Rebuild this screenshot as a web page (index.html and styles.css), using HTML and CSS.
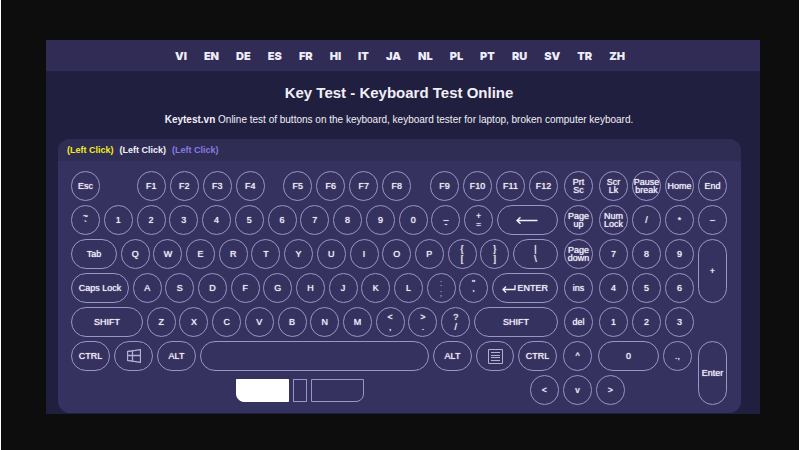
FILE: index.html
```html
<!DOCTYPE html>
<html lang="en">
<head>
<meta charset="utf-8">
<title>Key Test - Keyboard Test Online</title>
<link rel="stylesheet" href="styles.css">
</head>
<body>
<div class="page">
  <nav class="langs">
    <a href="#vi">VI</a><a href="#en">EN</a><a href="#de">DE</a><a href="#es">ES</a><a href="#fr">FR</a><a href="#hi">HI</a><a href="#it">IT</a><a href="#ja">JA</a><a href="#nl">NL</a><a href="#pl">PL</a><a href="#pt">PT</a><a href="#ru">RU</a><a href="#sv">SV</a><a href="#tr">TR</a><a href="#zh">ZH</a>
  </nav>
  <h1>Key Test - Keyboard Test Online</h1>
  <p class="intro"><b>Keytest.vn</b> Online test of buttons on the keyboard, keyboard tester for laptop, broken computer keyboard.</p>
  <main class="card">
    <header class="legend"><span class="pressed">(Left Click)</span><span>(Left Click)</span><span class="tested">(Left Click)</span></header>
    <div class="keyboard">
      <div class="rows">
        <div class="row">
          <div class="main fn">
            <button>Esc</button>
            <div class="group first"><button>F1</button><button>F2</button><button>F3</button><button>F4</button></div>
            <div class="group"><button>F5</button><button>F6</button><button>F7</button><button>F8</button></div>
            <div class="group"><button>F9</button><button>F10</button><button>F11</button><button>F12</button></div>
          </div>
          <button>Prt<br>Sc</button>
          <div class="group"><button>Scr<br>Lk</button><button>Pause<br>break</button><button>Home</button></div>
        </div>
        <div class="row">
          <div class="main">
            <button>~<br>`</button><button>1</button><button>2</button><button>3</button><button>4</button><button>5</button><button>6</button><button>7</button><button>8</button><button>9</button><button>0</button><button>_<br>-</button><button>+<br>=</button>
            <button class="w61" aria-label="Backspace"><svg width="22" height="9" viewBox="0 0 22 9"><path d="M1 4.5H21.500M4.500 1.200L1 4.500L4.500 7.800" fill="none" stroke="currentColor" stroke-width="1.500"/></svg></button>
          </div>
          <button>Page<br>up</button>
          <div class="group"><button>Num<br>Lock</button><button>/</button><button>*</button></div>
        </div>
        <div class="row">
          <div class="main">
            <button class="w46">Tab</button><button>Q</button><button>W</button><button>E</button><button>R</button><button>T</button><button>Y</button><button>U</button><button>I</button><button>O</button><button>P</button><button class="pair">{<br>[</button><button class="pair">}<br>]</button><button class="w45 pair">|<br>\</button>
          </div>
          <button>Page<br>down</button>
          <div class="group"><button>7</button><button>8</button><button>9</button></div>
        </div>
        <div class="row">
          <div class="main">
            <button class="w58">Caps Lock</button><button>A</button><button>S</button><button>D</button><button>F</button><button>G</button><button>H</button><button>J</button><button>K</button><button>L</button><button class="pair dim">:<br>;</button><button class="pair">"<br>'</button>
            <button class="w66"><svg width="14" height="9" viewBox="0 0 14 9"><path d="M1 5.500H13V1M4 2.500L1 5.500L4 8.500" fill="none" stroke="currentColor" stroke-width="1.300"/></svg><span>ENTER</span></button>
          </div>
          <button>ins</button>
          <div class="group"><button>4</button><button>5</button><button>6</button></div>
        </div>
        <div class="row">
          <div class="main">
            <button class="w72">SHIFT</button><button>Z</button><button>X</button><button>C</button><button>V</button><button>B</button><button>N</button><button>M</button><button class="pair">&lt;<br>,</button><button class="pair">&gt;<br>.</button><button class="pair">?<br>/</button><button class="w84">SHIFT</button>
          </div>
          <button>del</button>
          <div class="group"><button>1</button><button>2</button><button>3</button></div>
        </div>
        <div class="row bottom">
          <div class="main">
            <button class="w39">CTRL</button>
            <button class="w39" aria-label="Windows"><svg width="14" height="14" viewBox="0 0 14 14"><path d="M.5 2.500L5.500 1.800V6.500H.5ZM5.500 1.800L13.500 .6V6.500H5.500M.5 6.500V11.500L5.500 12.200V6.500M5.500 12.200L13.500 13.400V6.500" fill="none" stroke="#b4b0d4" stroke-width="1.300"/></svg></button>
            <button class="w39">ALT</button><button class="space" aria-label="Space"></button><button class="w39">ALT</button>
            <button class="w38" aria-label="Menu"><svg width="15" height="15" viewBox="0 0 15 15"><path d="M.5.500H14.500V14.500H.5ZM3 3.500H12M3 6.500H12M3 8.500H12M3 11.500H12" fill="none" stroke="#b4b0d4"/></svg></button>
            <button class="w39">CTRL</button>
          </div>
          <button>^</button>
          <div class="group"><button class="w61">0</button><button>.,</button></div>
        </div>
        <div class="row arrows">
          <div class="mouse"><button class="left" aria-label="Left mouse button"></button><button class="wheel" aria-label="Mouse wheel"></button><button class="right" aria-label="Right mouse button"></button></div>
          <div class="group"><button>&lt;</button><button>v</button><button>&gt;</button></div>
        </div>
      </div>
      <div class="side">
        <button>End</button><button>–</button><button class="tall">+</button><button class="tall last">Enter</button>
      </div>
    </div>
  </main>
</div>
</body>
</html>
```
FILE: styles.css
```css
* { box-sizing: border-box; }

body {
  min-height: 100vh;
  margin: 0;
  padding: 40px 39px 36px 45px;
  border: solid #fff;
  border-width: 0 1px;
  background: #0d0d0d;
  color: #f0eff8;
  font-family: "Liberation Sans", Arial, sans-serif;
}

.page {
  padding-bottom: 1px;
  background: #211f3f;
}

.langs {
  display: flex;
  justify-content: center;
  gap: 17px;
  height: 31px;
  align-items: center;
  padding-right: 6px;
  background: #302c55;
  font: 900 11px/14px Inter, sans-serif;
}

.langs a {
  color: #eeecfb;
  text-decoration: none;
}

h1 {
  margin: 12px 8px 0 0;
  font-size: 15px;
  line-height: 20px;
  text-align: center;
}

.intro {
  margin: 9px 8px 0 0;
  font-size: 10px;
  line-height: 16px;
  text-align: center;
}

.card {
  margin: 11px 19px 0 12px;
  border-radius: 12px;
  background: #36325f;
  overflow: hidden;
}

.legend {
  display: flex;
  gap: 6px;
  padding: 0 9px;
  background: #302d54;
  font-size: 9px;
  font-weight: bold;
  line-height: 22px;
}

.pressed { color: #f1ee20; }
.tested { color: #8a7be0; }

.keyboard {
  display: flex;
  gap: 4px;
  padding: 10px 14px 8px 13px;
}

.rows {
  display: flex;
  flex: 1;
  flex-direction: column;
  gap: 4px;
}

.row {
  display: flex;
  gap: 6px;
}

.main {
  display: flex;
  flex: 1;
  justify-content: space-between;
}

.group {
  display: flex;
  gap: 4px;
}

.fn .first { margin-left: 18px; }

button {
  display: flex;
  flex: none;
  align-items: center;
  justify-content: center;
  gap: 2px;
  width: 29px;
  height: 30px;
  padding: 0;
  border: 1px solid #9a95c8;
  border-radius: 15px;
  background: none;
  color: #efedfb;
  font: 9px/8px "Liberation Sans", Arial, sans-serif;
  text-shadow: 0 0 1px currentColor;
}

.pair { line-height: 10px; }
.dim { color: #8f8bb5; }
.w38 { width: 38px; }
.w39 { width: 39px; }
.w45 { width: 45px; }
.w46 { width: 46px; }
.w58 { width: 58px; }
.w61 { width: 61px; }
.w66 { width: 66px; }
.w72 { width: 72px; }
.w84 { width: 84px; }

.bottom { padding-right: 2px; }
.bottom .main { gap: 4px; }
.space { flex: 1; }

.arrows { padding-right: 69px; }

.mouse {
  display: flex;
  flex: 1;
  align-items: center;
  justify-content: center;
  gap: 4px;
  padding-left: 4px;
}

.mouse button {
  width: 53px;
  height: 23px;
  border-radius: 0;
}

.mouse .left {
  border-color: #fff;
  border-bottom-left-radius: 8px;
  background: #fff;
}

.mouse .wheel { width: 14px; }
.mouse .right { border-bottom-right-radius: 8px; }

.side {
  display: flex;
  flex-direction: column;
  gap: 4px;
}

.side .tall { height: 64px; }
.side .last { margin-top: auto; }
```
